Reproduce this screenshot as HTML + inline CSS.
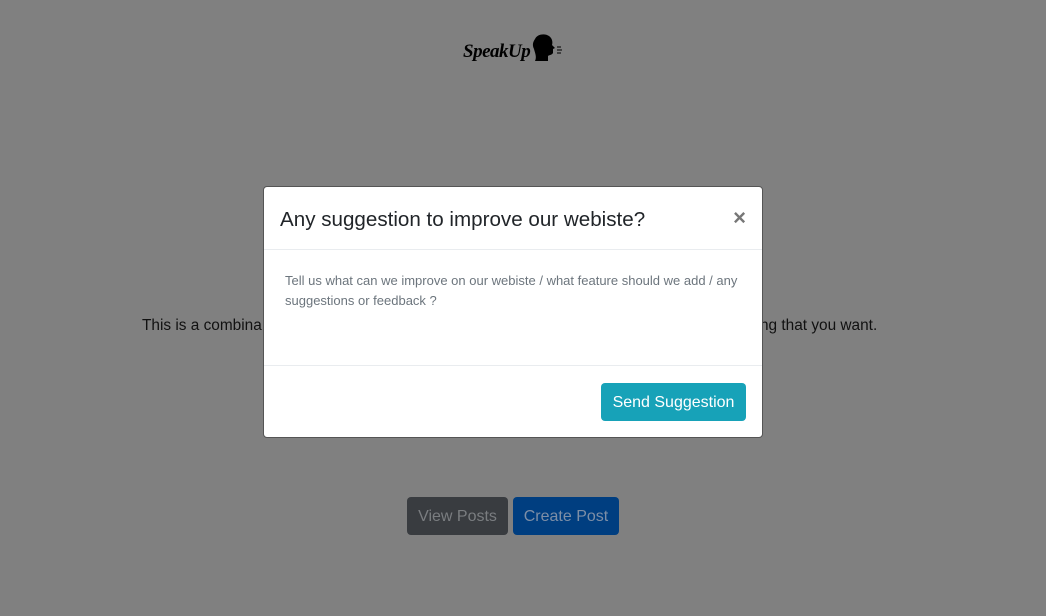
<!DOCTYPE html>
<html><head><style>
body{margin:0;width:1046px;height:616px;background:#808080;font-family:"Liberation Sans",sans-serif;position:relative;overflow:hidden}
.logo{position:absolute;left:463px;top:33px;font:italic bold 19px "Liberation Serif",serif;color:#000;letter-spacing:-0.5px}
.bg{position:absolute;top:317px;font-size:15.4px;color:#111}
.btn{position:absolute;top:497px;height:38px;border-radius:4px;font-size:16px;line-height:40px;text-align:center}
.modal{position:absolute;left:263px;top:186px;width:498px;height:250px;background:#fff;border:1px solid #555;border-radius:4px}
.hd{height:62px;border-bottom:1px solid #e9ecef;position:relative}
.hd h5{margin:0;position:absolute;left:16px;top:21px;font-size:20.6px;font-weight:normal;color:#212529}
.x{position:absolute;right:16px;top:18px;font-size:22px;color:#777;font-weight:bold}
.bd{height:116px;border-bottom:1px solid #e9ecef;padding:21px 20px 0 21px;box-sizing:border-box;font-size:13px;line-height:20px;color:#6c757d}
.send{position:absolute;left:337px;top:196px;width:145px;height:38px;background:#17a2b8;color:#fff;border-radius:4px;font-size:16px;line-height:40px;text-align:center}
</style></head><body>
<div class="logo">SpeakUp<svg width="34" height="32" viewBox="0 0 34 32" style="vertical-align:-8px;margin-left:1px"><path d="M4 6 C6 1 14 0 18 3 C21 5 22 9 21 12 L24 15 L22 16 L22 20 C21 22 18 22 17 23 L17 28 L4 28 C6 24 4 20 3 16 C1 12 2 9 4 6Z" fill="#000"/><path d="M26 14h4M26 17h5M26 20h4" stroke="#000" stroke-width="1"/></svg></div>
<div class="bg" style="left:142px">This is a combina</div>
<div class="bg" style="left:760px">ng that you want.</div>
<div class="btn" style="left:407px;width:101px;background:#393c40;color:#7a7d80">View Posts</div>
<div class="btn" style="left:513px;width:106px;background:#003e80;color:#7d8ea6">Create Post</div>
<div class="modal">
<div class="hd"><h5>Any suggestion to improve our webiste?</h5><span class="x">×</span></div>
<div class="bd">Tell us what can we improve on our webiste / what feature should we add / any suggestions or feedback ?</div>
<div class="send">Send Suggestion</div>
</div>
</body></html>
